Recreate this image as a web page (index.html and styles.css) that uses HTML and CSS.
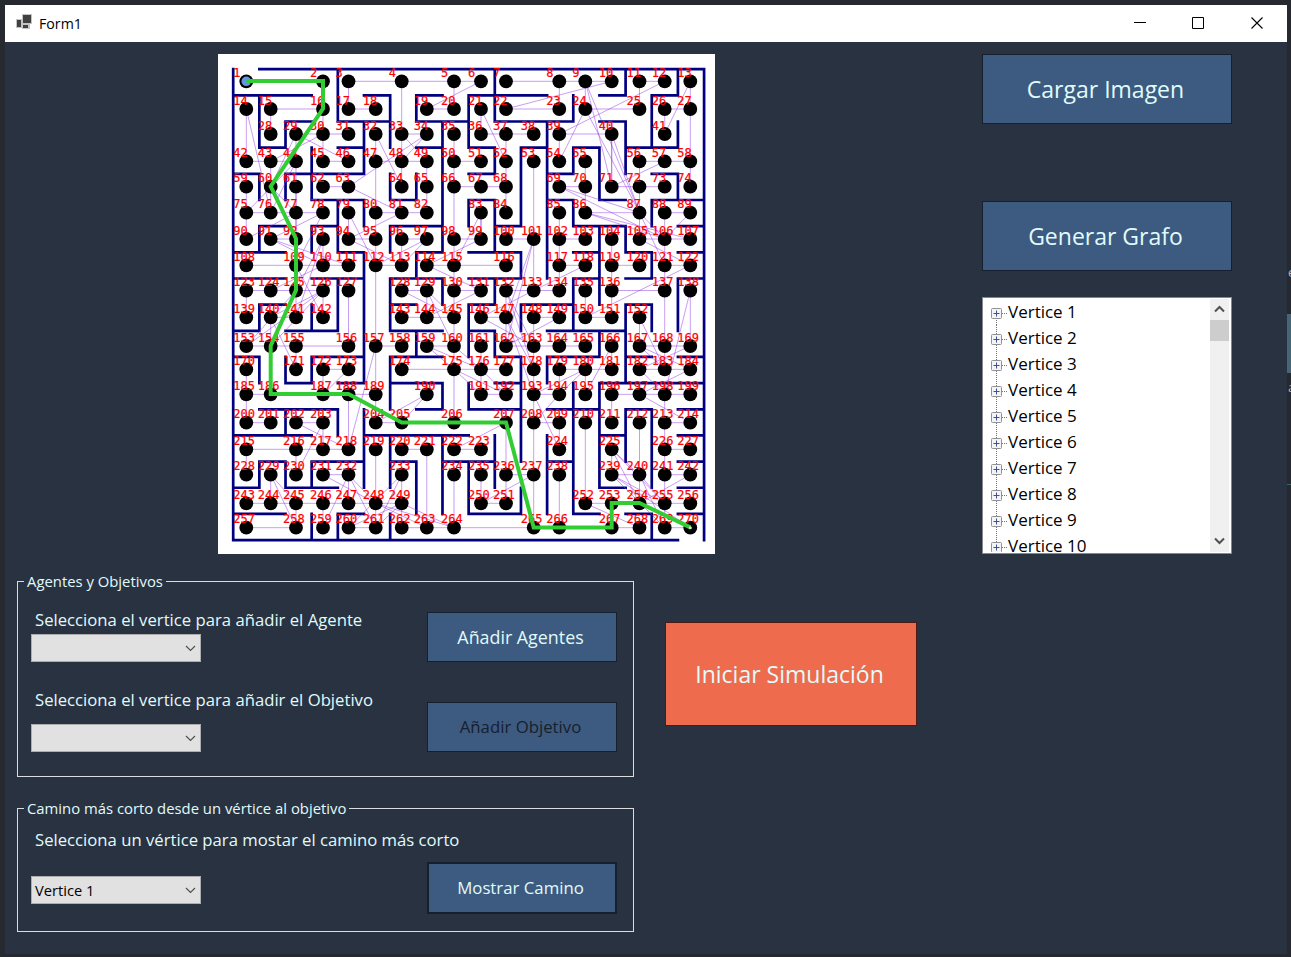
FILE: index.html
```html
<!DOCTYPE html>
<html lang="es">
<head>
<meta charset="utf-8">
<title>Form1</title>
<link rel="stylesheet" href="styles.css">
</head>
<body>
<div class="desktop">
  <span class="sliver sliver-teal"></span>
  <span class="sliver sliver-line"></span>
  <span class="sliver-char sliver-a">a</span>
  <span class="sliver-char sliver-e">e</span>
  <main class="window">
    <header class="titlebar">
      <svg class="app-icon" width="16" height="16" viewBox="0 0 16 16"><path d="M6 0h10v10H6zM0 5h6v9H0zM6 10h8v5H6z" fill="#c4c4c4"/><path d="M7 1h8v8H7zM1 6h4v7H1zM7 11h5v3H7z" fill="#414141"/></svg>
      <span class="title">Form1</span>
      <svg class="caption" width="46" height="37" viewBox="0 0 46 37"><path d="M11 17.5h12" stroke="#000"/></svg>
      <svg class="caption" width="58" height="37" viewBox="0 0 58 37"><path d="M23.500 12.500h11v11h-11z" fill="none" stroke="#000"/></svg>
      <svg class="caption" width="60" height="37" viewBox="0 0 60 37"><path d="M24.500 12.500l11 11M35.500 12.500l-11 11" fill="none" stroke="#000" stroke-width="1.100"/></svg>
    </header>
    <section class="top">
      <div class="maze"><svg id="maze" width="497" height="500" viewBox="0 0 497 500"></svg></div>
      <aside class="side">
        <button class="btn btn-large">Cargar Imagen</button>
        <button class="btn btn-large btn-second">Generar Grafo</button>
        <div class="tree">
          <ul class="nodes" id="nodes"></ul>
          <div class="scrollbar">
            <svg width="19" height="21" viewBox="0 0 19 21"><path d="M5 12.500l4.500-4.500 4.500 4.500" fill="none" stroke="#505050" stroke-width="2"/></svg>
            <span class="thumb"></span>
            <svg class="down" width="19" height="21" viewBox="0 0 19 21"><path d="M5 7.500l4.500 4.500 4.500-4.500" fill="none" stroke="#505050" stroke-width="2"/></svg>
          </div>
        </div>
      </aside>
    </section>
    <section class="bottom">
      <div class="groups">
        <fieldset class="group group-agents">
          <legend>Agentes y Objetivos</legend>
          <div class="group-body">
            <div class="fields">
              <label>Selecciona el vertice para añadir el Agente</label>
              <div class="combo"><span></span><svg width="11" height="7" viewBox="0 0 11 7"><path d="M1 1l4.500 4.500L10 1" fill="none" stroke="#505050" stroke-width="1.200"/></svg></div>
              <label class="label-second">Selecciona el vertice para añadir el Objetivo</label>
              <div class="combo combo-second"><span></span><svg width="11" height="7" viewBox="0 0 11 7"><path d="M1 1l4.500 4.500L10 1" fill="none" stroke="#505050" stroke-width="1.200"/></svg></div>
            </div>
            <div class="actions">
              <button class="btn">Añadir Agentes</button>
              <button class="btn btn-disabled">Añadir Objetivo</button>
            </div>
          </div>
        </fieldset>
        <fieldset class="group group-path">
          <legend>Camino más corto desde un vértice al objetivo</legend>
          <div class="group-body">
            <div class="fields fields-path">
              <label>Selecciona un vértice para mostar el camino más corto</label>
              <div class="combo combo-path"><span>Vertice 1</span><svg width="11" height="7" viewBox="0 0 11 7"><path d="M1 1l4.500 4.500L10 1" fill="none" stroke="#505050" stroke-width="1.200"/></svg></div>
            </div>
            <div class="actions actions-path">
              <button class="btn btn-focus">Mostrar Camino</button>
            </div>
          </div>
        </fieldset>
      </div>
      <button class="btn btn-start">Iniciar Simulación</button>
    </section>
  </main>
</div>
<script src="script.js"></script>
</body>
</html>
```
FILE: styles.css
```css
* { box-sizing: border-box; }
body { margin: 0; font-family: "Open Sans", "Noto Sans", sans-serif; overflow: hidden; }
.desktop { position: relative; width: 1291px; height: 957px; padding: 5px 4px 3px 5px; background: #26292f; overflow: hidden; }
.sliver { position: absolute; left: 1287px; width: 4px; }
.sliver-teal { top: 314px; height: 59px; background: #446677; }
.sliver-line { top: 484px; height: 1px; background: #3f6069; }
.sliver-char { position: absolute; left: 1288px; color: #a9b4c0; font-size: 13px; line-height: 16px; }
.sliver-a { top: 379px; }
.sliver-e { top: 264px; }
.window { position: relative; width: 1282px; height: 949px; background: #293241; }
.titlebar { display: flex; align-items: center; height: 37px; background: #fff; padding: 0 0 0 11px; }
.app-icon { margin-top: -3px; }
.title { flex: 1; margin-left: 7px; font-size: 14.2px; line-height: 37px; color: #000; }
.caption { flex: none; }
.top { display: flex; justify-content: space-between; padding: 12px 55px 0 213px; }
.maze { width: 497px; height: 500px; background: #fff; }
.maze svg { display: block; }
.maze text { font: 12px "DejaVu Sans Mono", monospace; fill: #f00; stroke: #f00; stroke-width: .2; }
.wall { stroke: #000080; stroke-width: 2.700; stroke-linecap: square; fill: none; }
.edge { stroke: #8a2be2; stroke-opacity: .55; stroke-width: .85; fill: none; }
.route { stroke: #32cd32; stroke-width: 4; fill: none; }
.side { display: flex; flex-direction: column; width: 250px; }
.btn { display: flex; align-items: center; justify-content: center; width: 190px; height: 50px; padding: 0 3px 0 0; border: 1px solid #161f2e; background: #3d5a80; color: #e0fbfc; font-family: inherit; font-size: 17.85px; line-height: 24px; white-space: nowrap; }
.btn-large { width: 250px; height: 70px; font-size: 23px; }
.btn-second { margin-top: 77px; }
.btn-disabled { color: #17202e; margin-top: 40px; font-size: 16.8px; }
.btn-focus { height: 52px; border-width: 2px; font-size: 16.8px; }
.btn-start { width: 252px; height: 104px; margin: 51px 0 0 31px; background: #ee6c4d; border-color: #4e1b14; font-size: 23px; }
.tree { display: flex; height: 257px; margin-top: 26px; border: 1px solid #828790; background: #fff; padding: 1px; overflow: hidden; }
.nodes { flex: 1; list-style: none; margin: 0; padding: 0 0 0 7px; height: 253px; overflow: hidden; }
.nodes li { display: flex; align-items: center; height: 26px; font-size: 17px; line-height: 26px; color: #000; }
.nodes svg { flex: none; }
.scrollbar { display: flex; flex-direction: column; width: 20px; background: #f0f0f0; border-right: 1px solid #fff; }
.scrollbar svg { flex: none; }
.thumb { height: 21px; background: #cdcdcd; }
.down { margin-top: auto; }
.bottom { display: flex; padding: 17px 0 0 12px; }
.groups { width: 617px; }
.group { margin: 0; padding: 0; border: 1px solid #dcdcdc; min-width: 0; }
.group legend { margin-left: 6px; padding: 0 3px; height: 21px; font-size: 14.85px; line-height: 21px; color: #e0fbfc; }
.group-agents { height: 206px; }
.group-path { height: 134px; margin-top: 21px; }
.group-body { display: flex; justify-content: space-between; padding: 0 16px 0 13px; }
.fields { width: 370px; padding-top: 17px; white-space: nowrap; }
.fields label { display: block; height: 22px; padding-left: 4px; font-size: 16.7px; line-height: 22px; color: #e0fbfc; }
.fields .label-second { margin-top: 27px; }
.combo { display: flex; align-items: center; justify-content: space-between; width: 170px; height: 28px; margin-top: 3px; padding: 0 4px 0 3px; border: 1px solid #adadad; background: #e1e1e1; font-size: 14.7px; line-height: 26px; color: #000; }
.fields .combo-second { margin-top: 13px; }
.actions { padding-top: 20px; }
.fields-path { padding-top: 10px; }
.fields .combo-path { margin-top: 25px; }
.actions-path { padding-top: 43px; }
```
FILE: script.js
```js
// Node grid: column centres, row centres and the columns used on each row.
const X = [28.3,52.7,78,105,130.5,157.7,183.7,208.8,236,263,288,315.7,341.3,367.3,393.7,421.5,446.7,472.3];
const Y = [27.3,55,80,107.3,132.7,158.7,185,211.3,236.5,263.3,292,315.3,340.3,368.7,395.3,420.7,449.3,473.7];
const ROWS = [
  [0,3,4,6,8,9,10,12,13,14,15,16,17],
  [0,1,3,4,5,7,8,9,10,12,13,15,16,17],
  [1,2,3,4,5,6,7,8,9,10,11,12,14,16],
  [0,1,2,3,4,5,6,7,8,9,10,11,12,13,15,16,17],
  [0,1,2,3,4,6,7,8,9,10,12,13,14,15,16,17],
  [0,1,2,3,4,5,6,7,9,10,12,13,15,16,17],
  [0,1,2,3,4,5,6,7,8,9,10,11,12,13,14,15,16,17],
  [0,2,3,4,5,6,7,8,10,12,13,14,15,16,17],
  [0,1,2,3,4,6,7,8,9,10,11,12,13,14,16,17],
  [0,1,2,3,6,7,8,9,10,11,12,13,14,15],
  [0,1,2,4,5,6,7,8,9,10,11,12,13,14,15,16,17],
  [0,2,3,4,6,8,9,10,11,12,13,14,15,16,17],
  [0,1,3,4,5,7,9,10,11,12,13,14,15,16,17],
  [0,1,2,3,5,6,8,10,11,12,13,14,15,16,17],
  [0,2,3,4,5,6,7,8,9,12,14,16,17],
  [0,1,2,3,4,6,8,9,10,11,12,14,15,16,17],
  [0,1,2,3,4,5,6,9,10,13,14,15,16,17],
  [0,2,3,4,5,6,7,8,11,12,14,15,16,17]
];
// Wall runs per grid line, as [from, to] pairs.
const H = [
  [[1,18]],
  [[0,3],[5,6],[7,8],[9,12],[14,15],[16,17]],
  [[2,3],[4,6],[7,9],[10,13],[14,15]],
  [[1,2],[4,5],[7,8],[9,10],[11,12],[13,14],[15,17]],
  [[0,1],[2,5],[9,10],[12,13],[16,17]],
  [[3,5],[6,7],[9,10],[12,13],[14,15],[16,18]],
  [[1,2],[3,4],[6,8],[10,11],[13,15],[17,18]],
  [[0,2],[4,5],[7,8],[9,11],[13,14],[15,16],[17,18]],
  [[0,2],[3,5],[6,8],[9,11],[13,14],[15,16],[17,18]],
  [[1,2],[6,7],[9,10],[11,13],[15,16]],
  [[0,1],[2,4],[6,8],[9,10],[12,15]],
  [[0,1],[3,5],[6,8],[10,11],[12,14],[15,16],[17,18]],
  [[2,3],[4,5],[6,8],[10,11],[14,18]],
  [[1,4],[7,8],[9,11],[12,14],[15,16],[17,18]],
  [[0,3],[5,9],[14,15],[17,18]],
  [[1,2],[3,5],[6,7],[8,10],[12,13],[17,18]],
  [[0,1],[2,4],[14,15],[17,18]],
  [[0,2],[4,5],[9,11],[13,14],[15,16],[17,18]],
  [[0,17]]
];
const V = [
  [[0,18]],
  [[1,3],[4,5],[6,7],[9,10],[11,12],[15,16]],
  [[2,3],[4,5],[11,12],[13,14],[15,16]],
  [[3,5],[6,7],[9,10],[11,12],[15,16],[17,18]],
  [[0,2],[5,7],[8,10],[13,14],[17,18]],
  [[2,4],[5,6],[7,12],[13,16]],
  [[1,3],[4,5],[6,7],[8,10],[11,13],[14,16],[17,18]],
  [[1,2],[4,5],[7,8],[10,11],[15,17]],
  [[2,7],[8,9],[12,13],[14,17]],
  [[1,3],[5,6],[9,11],[12,13],[15,17]],
  [[0,2],[3,4],[5,7],[8,9],[10,11],[14,16]],
  [[3,6],[7,8],[9,10],[11,15],[16,17]],
  [[2,8],[11,12],[14,17]],
  [[1,2],[3,4],[5,6],[8,10],[12,17]],
  [[3,5],[6,9],[10,11],[12,16]],
  [[0,1],[2,4],[6,7],[9,12],[13,15]],
  [[1,3],[5,6],[7,8],[9,10],[13,16],[17,18]],
  [[0,1],[2,3],[4,5],[8,10]],
  [[0,18]]
];
// Edges that run across rows and columns.
const CROSS = [
  [10,22],[12,39],[6,19],[14,76],[29,46],[29,60],[30,43],[32,64],[34,48],[33,49],[63,34],[63,81],[21,52],
  [13,41],[24,54],[24,87],[9,71],[9,87],[40,71],[40,87],[57,71],[69,87],[69,106],[86,106],[86,107],[44,76],[44,75],
  [60,77],[77,90],[78,91],[78,109],[44,92],[91,110],[93,141],[93,125],[79,112],[81,94],[94,113],[97,112],[97,113],
  [83,99],[99,114],[114,131],[115,83],[89,106],[87,121],[105,122],[87,106],[122,150],[118,133],[101,147],[101,162],
  [109,142],[110,124],[111,91],[126,140],[126,153],[126,154],[125,153],[140,171],[128,145],[129,145],[129,160],[131,144],
  [132,178],[132,163],[133,146],[146,163],[147,178],[147,193],[149,162],[152,183],[138,198],[159,175],[159,176],
  [160,176],[175,191],[175,192],[176,192],[167,184],[169,182],[182,198],[184,197],[167,183],[180,194],[180,193],[166,195],[190,205],[190,204],
  [173,187],[157,218],[202,218],[203,230],[193,224],[197,214],[194,208],[207,222],[229,258],[229,245],[231,248],[232,259],
  [232,261],[232,248],[233,260],[233,261],[248,264],[248,263],[249,261],[249,260],[249,264],[237,250],[225,240],[225,254],[225,255],[239,255],
  [239,269],[240,269],[242,254],[252,268],[253,267],[240,255],[239,270]
];
const ROUTE = [1,2,16,60,92,109,125,154,186,188,205,207,265,267,253,254,270];

const line = i => 15.2 + 26.16 * i;
const nodes = [];
ROWS.forEach((cols, r) => cols.forEach(c => nodes.push({ c, r, x: X[c], y: Y[r] })));

const blockedV = (k, r) => V[k].some(([a, b]) => a <= r && r < b);
const blockedH = (k, c) => H[k].some(([a, b]) => a <= c && c < b);
let edges = '';
const seg = (a, b) => { edges += `M${a.x} ${a.y}L${b.x} ${b.y}`; };
nodes.forEach((n, i) => {
  const next = nodes[i + 1];
  if (next && next.r === n.r) {
    let open = true;
    for (let k = n.c + 1; k <= next.c; k++) if (blockedV(k, n.r)) open = false;
    if (open) seg(n, next);
  }
  const below = nodes.find(m => m.c === n.c && m.r > n.r);
  if (below) {
    let open = true;
    for (let k = n.r + 1; k <= below.r; k++) if (blockedH(k, n.c)) open = false;
    if (open) seg(n, below);
  }
});
CROSS.forEach(([a, b]) => seg(nodes[a - 1], nodes[b - 1]));

let walls = '';
H.forEach((runs, j) => runs.forEach(([a, b]) => { walls += `M${line(a)} ${line(j)}H${line(b)}`; }));
V.forEach((runs, i) => runs.forEach(([a, b]) => { walls += `M${line(i)} ${line(a)}V${line(b)}`; }));

let out = `<path class="wall" d="${walls}"/><path class="edge" d="${edges}"/>`;
nodes.forEach((n, i) => {
  out += `<circle cx="${n.x}" cy="${n.y}" r="6.900"/>`;
  if (i === 0) out += `<circle cx="${n.x}" cy="${n.y}" r="4.800" fill="#6495ed"/>`;
});
nodes.forEach((n, i) => { out += `<text x="${n.x - 13}" y="${n.y - 4.300}">${i + 1}</text>`; });
out += `<polyline class="route" points="${ROUTE.map(i => nodes[i - 1].x + ',' + (nodes[i - 1].y - .3)).join(' ')}"/>`;
out += `<circle cx="472.300" cy="473.700" r="1.500" fill="#e6e6c8"/>`;
document.getElementById('maze').innerHTML = out;

// Tree rows with their expander boxes and dotted connectors.
let rows = '';
for (let i = 1; i <= 10; i++) {
  const top = i === 1 ? 9 : 0;
  rows += `<li><svg width="17" height="26" viewBox="0 0 17 26"><path d="M5.500 ${top}V26M11 14.500h5" stroke="#777" stroke-dasharray="1 1" fill="none"/><rect x=".5" y="9.500" width="10" height="10" rx="1" fill="#f4f4f4" stroke="#919191"/><path d="M2.500 14.500h6M5.500 11.500v6" stroke="#3c4f9a"/></svg>Vertice ${i}</li>`;
}
document.getElementById('nodes').innerHTML = rows;
```
